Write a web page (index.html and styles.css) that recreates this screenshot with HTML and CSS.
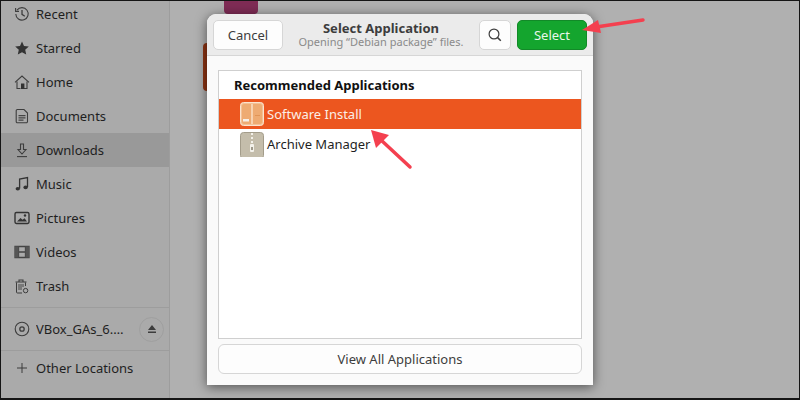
FILE: index.html
```html
<!DOCTYPE html>
<html>
<head>
  <title>Select Application</title>
  <link rel="stylesheet" href="styles.css">
</head>
<body>
  <div class="screen">
    <div class="sidebar">
      <div class="places">
        <div class="place">
          <svg class="icon" viewBox="0 0 16 16"><path d="M3 4.2A6.2 6.2 0 1 1 1.8 8" fill="none" stroke="#3d3d3d" stroke-width="1.1"/><path d="M1.6 2v3.4H5" fill="none" stroke="#3d3d3d" stroke-width="1.1"/><path d="M8 4v4.4l2.8 1.8" fill="none" stroke="#3d3d3d" stroke-width="1.3"/></svg>
          <span>Recent</span>
        </div>
        <div class="place">
          <svg class="icon" viewBox="0 0 16 16"><path d="M8 1.6l2 4.5 4.8.5-3.6 3.2 1 4.8L8 12.2l-4.2 2.4 1-4.8L1.2 6.6 6 6.1z" fill="#333"/></svg>
          <span>Starred</span>
        </div>
        <div class="place">
          <svg class="icon" viewBox="0 0 16 16"><path d="M1 8.4L8 2l7 6.4" fill="none" stroke="#3d3d3d" stroke-width="1.1"/><path d="M3 7.5V14.5H6.5" fill="none" stroke="#3d3d3d" stroke-width="1.1"/><path d="M13 7.5V14.5H9.5" fill="none" stroke="#3d3d3d" stroke-width="1.1"/><rect x="7" y="9.5" width="3.4" height="5.5" fill="#333"/></svg>
          <span>Home</span>
        </div>
        <div class="place">
          <svg class="icon" viewBox="0 0 16 16"><path d="M3.4 1.5H10L13.5 5V13.5a1.2 1.2 0 0 1-1.2 1.2H3.4a1.2 1.2 0 0 1-1.2-1.2V2.7a1.2 1.2 0 0 1 1.2-1.2z" fill="none" stroke="#3d3d3d" stroke-width="1.1"/><path d="M4.5 7h7v1.2h-7zM4.5 9.3h7v1.2h-7zM4.5 11.6h5v1.2h-5z" fill="#444"/></svg>
          <span>Documents</span>
        </div>
        <div class="place active">
          <svg class="icon" viewBox="0 0 16 16"><path d="M6.5 2h3v5.5H12L8 12 4 7.5h2.5z" fill="none" stroke="#3d3d3d" stroke-width="1.1"/><path d="M3 14.6h10" stroke="#3d3d3d" stroke-width="1.1"/></svg>
          <span>Downloads</span>
        </div>
        <div class="place">
          <svg class="icon" viewBox="0 0 16 16"><path d="M5.6 12.5V3L13.5 1.6V11" fill="none" stroke="#333" stroke-width="1.3"/><ellipse cx="3.8" cy="12.8" rx="2.2" ry="1.8" fill="#333"/><ellipse cx="11.6" cy="11.4" rx="2.2" ry="1.8" fill="#333"/></svg>
          <span>Music</span>
        </div>
        <div class="place">
          <svg class="icon" viewBox="0 0 16 16"><rect x="1" y="2.5" width="14" height="11" rx="1.4" fill="none" stroke="#333" stroke-width="1.4"/><path d="M3 11.5l3.5-3.6 2 1.8 2-1.4 2.5 3.2z" fill="#333"/><circle cx="11" cy="5.5" r="1.2" fill="#333"/></svg>
          <span>Pictures</span>
        </div>
        <div class="place">
          <svg class="icon" viewBox="0 0 16 16"><path d="M1 2.5h14v11H1z" fill="none" stroke="#444" stroke-width="1.3"/><path d="M4.5 2.5v11M11.5 2.5v11M1 8h3.5M11.5 8H15M4.5 8h7" stroke="#444" stroke-width="1.3"/><path d="M1 2.5h3.5v11H1zM11.5 2.5H15v11h-3.5z" fill="#555"/></svg>
          <span>Videos</span>
        </div>
        <div class="place">
          <svg class="icon" viewBox="0 0 16 16"><path d="M2.5 4.5V14a1 1 0 0 0 1 1H8M11.5 4.5V8" fill="none" stroke="#3d3d3d" stroke-width="1"/><path d="M1.5 4h11M5 4V2h4v2" fill="none" stroke="#3d3d3d" stroke-width="1.1"/><path d="M5 6v6M7 6v6M9 6v3" stroke="#3d3d3d" stroke-width=".9"/><circle cx="11.6" cy="12.6" r="2.2" fill="none" stroke="#3d3d3d" stroke-width="1"/></svg>
          <span>Trash</span>
        </div>
      </div>
      <div class="volume">
        <div class="place">
          <svg class="icon" viewBox="0 0 16 16"><circle cx="8" cy="8" r="6.8" fill="none" stroke="#3d3d3d" stroke-width="1.1"/><circle cx="8" cy="8" r="2.2" fill="none" stroke="#3d3d3d" stroke-width="1.3"/></svg>
          <span class="volume-name">VBox_GAs_6.…</span>
          <div class="eject">
            <svg viewBox="0 0 10 10" width="10" height="10"><path d="M5 1l4 5H1zM1 7.4h8v1.6H1z" fill="#3d3d3d"/></svg>
          </div>
        </div>
      </div>
      <div class="place">
        <svg class="icon" viewBox="0 0 16 16"><path d="M8 3v10M3 8h10" stroke="#3d3d3d" stroke-width="1"/></svg>
        <span>Other Locations</span>
      </div>
    </div>
    <div class="main">
      <div class="file-pink"></div>
      <div class="file-orange"></div>
    </div>

    <div class="dialog">
      <div class="dialog-header">
        <button class="btn btn-cancel">Cancel</button>
        <div class="dialog-title">
          <div class="title">Select Application</div>
          <div class="subtitle">Opening “Debian package” files.</div>
        </div>
        <button class="btn btn-search">
          <svg viewBox="0 0 16 16" width="16" height="16"><circle cx="7" cy="7" r="4.9" fill="none" stroke="#3d3d3d" stroke-width="1.2"/><path d="M10.6 10.6l3.2 3.2" stroke="#3d3d3d" stroke-width="1.5"/></svg>
        </button>
        <button class="btn btn-select">Select</button>
      </div>
      <div class="dialog-body">
        <div class="app-list">
          <div class="list-heading">Recommended Applications</div>
          <div class="app-row selected">
            <svg class="app-icon" viewBox="0 0 24 24">
              <rect x=".5" y=".5" width="23" height="23" rx="3" fill="#f3c196" stroke="#fbe3cd"/>
              <rect x="2" y="2" width="20" height="20" rx="2" fill="#eeab72"/>
              <rect x="11" y="2" width="2" height="20" fill="#f7d2b0"/>
              <rect x="3" y="17" width="6" height="2.5" fill="#f6efe8"/>
              <rect x="15" y="13" width="5" height=".8" fill="#dd9050"/>
            </svg>
            <span>Software Install</span>
          </div>
          <div class="app-row">
            <svg class="app-icon" viewBox="0 0 24 24">
              <rect x=".5" y=".5" width="23" height="26" rx="3" fill="#c4bdab" stroke="#a39c8a"/>
              <path d="M11 1h2v2h-2zM11 5h2v2h-2zM11 9h2v2h-2z" fill="#f3f1ea"/>
              <rect x="10" y="12" width="4" height="8" rx="1" fill="#f3f1ea"/>
              <rect x="11.2" y="15" width="1.6" height="3" fill="#8a8474"/>
            </svg>
            <span>Archive Manager</span>
          </div>
        </div>
        <button class="btn btn-view">View All Applications</button>
      </div>
    </div>

    <svg class="arrows" viewBox="0 0 800 400">
      <path d="M643 20L596 27" stroke="#f4404f" stroke-width="3.5" stroke-linecap="round"/>
      <path d="M582 30L598 20 601 33z" fill="#f4404f"/>
      <path d="M410 167L381 140" stroke="#f4404f" stroke-width="3.5" stroke-linecap="round"/>
      <path d="M371 130L389 135 376 148z" fill="#f4404f"/>
    </svg>
  </div>
</body>
</html>
```

FILE: styles.css
```css
* {
  box-sizing: border-box;
}
body {
  margin: 0;
  font-family: "Noto Sans", "Open Sans", sans-serif;
  font-size: 13px;
  color: #1f1f1f;
}
.screen {
  position: relative;
  display: flex;
  width: 800px;
  height: 400px;
  overflow: hidden;
  background-color: #b0b0b0;
  border: 1px solid #151515;
  border-bottom-width: 2px;
}
.sidebar {
  width: 169px;
  padding-top: -3px;
  background-color: #aaaaaa;
  border-right: 1px solid #9d9d9d;
  flex-shrink: 0;
}
.places {
  margin-top: -4px;
}
.place {
  display: flex;
  align-items: center;
  height: 34px;
  padding-left: 13px;
  gap: 6px;
}
.place.active {
  background-color: #999999;
}
.icon {
  width: 16px;
  height: 16px;
  flex-shrink: 0;
}
.volume {
  margin-top: 4px;
  padding: 4px 0;
  border-top: 1px solid #9d9d9d;
  border-bottom: 1px solid #9d9d9d;
}
.volume-name {
  width: 92px;
  white-space: nowrap;
  overflow: hidden;
}
.eject {
  display: flex;
  align-items: center;
  justify-content: center;
  width: 25px;
  height: 25px;
  margin-left: 5px;
  border: 1px solid #9f9f9f;
  border-radius: 50%;
}
.main {
  position: relative;
  flex: 1;
}
.file-pink {
  position: absolute;
  left: 54px;
  top: -4px;
  width: 34px;
  height: 17px;
  background-color: #7f2c55;
  border-radius: 4px;
}
.file-orange {
  position: absolute;
  left: 33px;
  top: 42px;
  width: 10px;
  height: 48px;
  background-color: #8f3413;
  border-radius: 4px;
}
.dialog {
  position: absolute;
  left: 206px;
  top: 13px;
  width: 386px;
  height: 371px;
  display: flex;
  flex-direction: column;
  background-color: #fafafa;
  border-radius: 9px 9px 0 0;
  box-shadow: 0 2px 12px rgba(0, 0, 0, 0.55);
}
.dialog-header {
  display: flex;
  align-items: center;
  gap: 6px;
  height: 42px;
  padding: 0 6px;
  background-color: #ebebeb;
  border-bottom: 1px solid #d6d6d6;
  border-radius: 9px 9px 0 0;
}
.dialog-title {
  flex: 1;
  text-align: center;
  line-height: 14px;
}
.title {
  font-weight: bold;
  color: #3d3d3d;
}
.subtitle {
  font-size: 11px;
  color: #8a8a8a;
}
.btn {
  height: 30px;
  font-family: inherit;
  font-size: 13px;
  color: #3d3d3d;
  background-color: #fdfdfd;
  border: 1px solid #d6d6d6;
  border-radius: 5px;
}
.btn-cancel {
  width: 70px;
}
.btn-search {
  display: flex;
  align-items: center;
  justify-content: center;
  width: 32px;
  padding: 0;
}
.btn-select {
  width: 70px;
  color: #e9f6e9;
  background-color: #14a52e;
  border-color: #128a28;
}
.dialog-body {
  flex: 1;
  display: flex;
  flex-direction: column;
  gap: 5px;
  padding: 14px 11px 11px;
}
.app-list {
  flex: 1;
  background-color: #ffffff;
  border: 1px solid #cfcfcf;
}
.list-heading {
  height: 28px;
  padding-left: 15px;
  line-height: 29px;
  font-weight: bold;
  color: #111;
}
.app-row {
  display: flex;
  align-items: center;
  gap: 3px;
  height: 30px;
  padding-left: 21px;
}
.app-row.selected {
  color: #fbeee6;
  background-color: #ec561f;
}
.app-icon {
  width: 24px;
  height: 26px;
}
.btn-view {
  height: 30px;
  flex-shrink: 0;
  border-radius: 6px;
}
.arrows {
  position: absolute;
  left: -1px;
  top: -1px;
  width: 800px;
  height: 400px;
}
```
